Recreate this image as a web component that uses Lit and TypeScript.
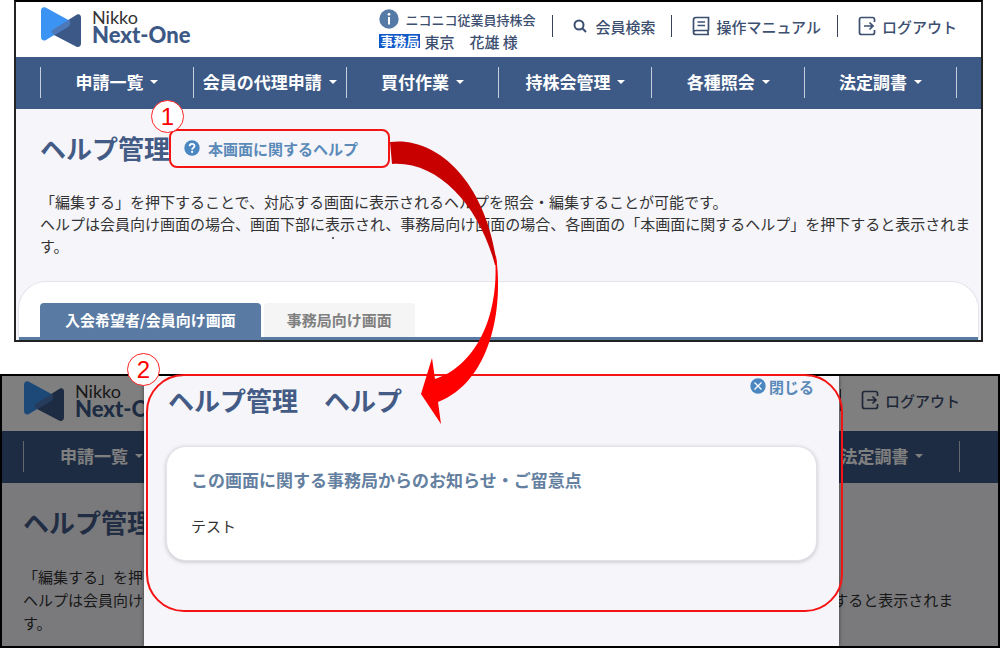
import { LitElement, html, svg, css } from "lit";
import { customElement, property } from "lit/decorators.js";

const NAV = ["申請一覧", "会員の代理申請", "買付作業", "持株会管理", "各種照会", "法定調書"];

const logo = html`<svg width="42" height="42" viewBox="0 0 42 42" aria-hidden="true">
  <path d="M37 8.500C39.500 7.500 41 9 41 11.500V37.500C41 40.500 38.500 42 36 40.500L13 28.500C10.500 27 10.500 25 13 23.500Z" fill="#3c5886" />
  <path d="M1 5C1 2 3 .5 6 1.700L27.500 13.500C31 15.500 31 18.500 27.500 21L6 34C3.500 35.300 1 34 1 31Z" fill="#3b93f3" />
  <path d="M11.800 26.500C11 25.700 11.500 24.500 13 23.500L29.500 13.500V15C31 17 30 19.500 27.500 21L14 29.200Z" fill="#4d79b8" />
</svg>`;

const searchIcon = html`<svg width="14" height="16" viewBox="0 0 14 16" aria-hidden="true">
  <g fill="none" stroke="currentColor" stroke-width="2"><circle cx="6" cy="7" r="4.500" /><path d="M9.300 10.300L13 14" /></g>
</svg>`;

const bookIcon = html`<svg width="18" height="20" viewBox="0 0 18 20" aria-hidden="true">
  <g fill="none" stroke="currentColor" stroke-width="1.700">
    <path d="M16.500 14.500V1.500H4Q1.500 1.500 1.500 4V16.500Q1.500 18.500 4 18.500H17M16.500 14.500H4Q1.500 14.500 1.500 16.500M16 14.500V18.500M5.500 6H13M5.500 9.500H13" />
  </g>
</svg>`;

const logoutIcon = html`<svg width="18" height="20" viewBox="0 0 18 20" aria-hidden="true">
  <g fill="none" stroke="currentColor" stroke-width="1.700">
    <path d="M16.500 6V3.500Q16.500 1.500 14.500 1.500H3.500Q1.500 1.500 1.500 3.500V16.500Q1.500 18.500 3.500 18.500H14.500Q16.500 18.500 16.500 16.500V14M6 10H14.500M11.500 6.500L15 10L11.500 13.500" />
  </g>
</svg>`;

const infoIcon = html`<svg width="20" height="20" viewBox="0 0 20 20" aria-hidden="true">
  <circle cx="10" cy="10" r="9.700" fill="#547aa5" />
  <circle cx="10" cy="5.300" r="1.400" fill="#fff" /><path d="M10 8V15.500" stroke="#fff" stroke-width="2" />
</svg>`;

const helpIcon = html`<svg width="16" height="16" viewBox="0 0 16 16" aria-hidden="true">
  <circle cx="8" cy="8" r="7.700" fill="#4a86c0" />
  <path d="M5.600 6.300C5.600 3 10.500 3.200 10.500 6C10.500 7.700 8.100 7.700 8.100 9.700" fill="none" stroke="#fff" stroke-width="1.800" />
  <circle cx="8.100" cy="11.900" r="1.100" fill="#fff" />
</svg>`;

const closeIcon = html`<svg width="16" height="16" viewBox="0 0 16 16" aria-hidden="true">
  <circle cx="8" cy="8" r="7.700" fill="#4a86c0" />
  <path d="M4.500 4.500L11.500 11.500M11.500 4.500L4.500 11.500" stroke="#fff" stroke-width="1.300" />
</svg>`;

const shared = css`
  * { box-sizing: border-box; }
  a { color: inherit; text-decoration: none; }
  button { margin: 0; padding: 0; border: 0; background: none; color: inherit; font: inherit; cursor: pointer; }
  svg { display: block; flex: none; }
`;

@customElement("site-header")
export class SiteHeader extends LitElement {
  static styles = [
    shared,
    css`
      :host { display: block; color: #3d4f70; }
      .top {
        display: flex; align-items: flex-start; justify-content: space-between; height: 55px;
        padding: 4px var(--edge-right) 0 var(--edge-left); background: #fff; white-space: nowrap;
      }
      .brand { display: flex; gap: 10px; font-family: Lato, sans-serif; }
      .names { display: flex; flex-direction: column; padding-top: 2px; }
      .nikko { font-size: 18px; line-height: 18px; color: #333; }
      .next { font-size: 22px; line-height: 18px; font-weight: 900; color: #3c5886; }
      .tools { display: flex; }
      .user { display: flex; flex-direction: column; padding: 2px 17px 0 0; }
      .row { display: flex; align-items: center; height: 22px; }
      .org { gap: 6px; font-size: 13px; font-weight: 500; }
      .person { gap: 4px; font-size: 15px; font-weight: 500; }
      .badge { padding: 0 1px; background: #1057c8; color: #fff; font-size: 13px; line-height: 14px; font-weight: 700; }
      .tool {
        display: flex; align-items: center; gap: 6px; height: 22px; margin-top: 9px;
        padding: 0 16px 0 20px; border-left: 1px solid #39445a; font-size: 15px; font-weight: 500;
      }
      .tool:last-child { padding-right: 0; }
      .search { gap: 8px; }
      .nav {
        display: grid; grid-template-columns: repeat(6, 1fr); height: 52px; align-items: center;
        padding: 0 var(--edge-right) 2px var(--edge-left); background: #3d5986;
      }
      .item {
        display: flex; align-items: center; justify-content: center; gap: 7px; height: 31px;
        border-left: 1px solid #c5cedd; color: #fff; font-size: 17px; line-height: 24px; font-weight: 700; white-space: nowrap;
      }
      .item:last-child { border-right: 1px solid #c5cedd; }
      .caret { border: 4px solid transparent; border-top-color: #fff; border-bottom: 0; }
    `,
  ];

  render() {
    return html`
      <header class="top">
        <a class="brand" href="#">${logo}<span class="names"><span class="nikko">Nikko</span><span class="next">Next-One</span></span></a>
        <div class="tools">
          <div class="user">
            <div class="row org">${infoIcon}<span>ニコニコ従業員持株会</span></div>
            <div class="row person"><span class="badge">事務局</span><span>東京　花雄 様</span></div>
          </div>
          <a class="tool search" href="#">${searchIcon}会員検索</a>
          <a class="tool" href="#">${bookIcon}操作マニュアル</a>
          <a class="tool" href="#">${logoutIcon}ログアウト</a>
        </div>
      </header>
      <nav class="nav">
        ${NAV.map((label) => html`<button class="item" type="button">${label}<span class="caret"></span></button>`)}
      </nav>
    `;
  }
}

@customElement("help-page")
export class HelpPage extends LitElement {
  @property({ type: Boolean }) tabs = false;

  static styles = [
    shared,
    css`
      :host { display: block; background: #f5f5fa; }
      .intro { padding: 20px var(--text-right) 0 var(--edge-left); }
      .title { display: flex; align-items: center; height: 38px; }
      h1 { margin: 0; font-size: 26px; line-height: 38px; font-weight: 700; color: #435b85; white-space: nowrap; }
      .help { display: flex; align-items: center; gap: 8px; margin-left: 14px; font-size: 15px; font-weight: 700; color: #5a8ab8; white-space: nowrap; }
      .text { margin: 24px 0 0; font-size: 15px; line-height: var(--text-line); color: #333; }
      .panel { margin: 24px 2px 0; padding-top: 21px; border: 1px solid #e3e5ec; border-bottom: 0; border-radius: 28px 28px 0 0; background: #fff; }
      .tabs { display: flex; gap: 3px; padding: 0 21px; border-bottom: 3px solid #587aa3; }
      .tab { padding: 0 23px 2px; height: 34px; border-radius: 4px 4px 0 0; background: #f5f5f5; color: #808080; font-size: 15px; font-weight: 700; white-space: nowrap; }
      .active { padding: 0 25px 2px; background: #587aa3; color: #fff; }
    `,
  ];

  render() {
    return html`
      <site-header></site-header>
      <main>
        <div class="intro">
          <div class="title"><h1>ヘルプ管理</h1><a class="help" href="#">${helpIcon}本画面に関するヘルプ</a></div>
          <p class="text">「編集する」を押下することで、対応する画面に表示されるヘルプを照会・編集することが可能です。<br />ヘルプは会員向け画面の場合、画面下部に表示され、事務局向け画面の場合、各画面の「本画面に関するヘルプ」を押下すると表示されます。</p>
        </div>
        ${this.tabs
          ? html`<div class="panel">
              <div class="tabs" role="tablist">
                <button class="tab active" type="button" role="tab" aria-selected="true">入会希望者/会員向け画面</button>
                <button class="tab" type="button" role="tab" aria-selected="false">事務局向け画面</button>
              </div>
            </div>`
          : ""}
      </main>
    `;
  }
}

@customElement("help-dialog")
export class HelpDialog extends LitElement {
  static styles = [
    shared,
    css`
      :host { display: block; }
      .dialog {
        position: static; display: block; width: 100%; height: 100%; margin: 0; padding: 0 22px; border: 0;
        background: #f5f5fa; box-shadow: 0 0 4px rgba(0, 0, 0, 0.5);
      }
      .head { display: flex; justify-content: space-between; align-items: flex-start; padding: 0 3px 0 2px; }
      h2 { margin: 3px 0 0; font-size: 26px; line-height: 42px; font-weight: 700; color: #435b85; }
      .close { display: flex; align-items: center; gap: 3px; height: 20px; color: #5a8ab8; font-size: 15px; font-weight: 700; }
      .card { margin-top: 25px; padding: 20px 24px 23px; border: 1px solid #e2e3e9; border-radius: 20px; background: #fff; box-shadow: 0 1px 4px rgba(0, 0, 0, 0.2); }
      h3 { margin: 0; font-size: 17px; line-height: 26px; font-weight: 700; color: #6480a0; }
      p { margin: 22px 0 0; font-size: 15px; line-height: 22px; color: #333; }
    `,
  ];

  render() {
    return html`<dialog class="dialog" open aria-label="ヘルプ管理　ヘルプ">
      <div class="head"><h2>ヘルプ管理　ヘルプ</h2><button class="close" type="button">${closeIcon}閉じる</button></div>
      <section class="card"><h3>この画面に関する事務局からのお知らせ・ご留意点</h3><p>テスト</p></section>
    </dialog>`;
  }
}

@customElement("app-root")
export class AppRoot extends LitElement {
  static styles = [
    shared,
    css`
      :host { display: block; font-family: "Noto Sans CJK JP", sans-serif; background: #fff; }
      .sheet { position: relative; display: flex; flex-direction: column; gap: 32px; min-height: 100vh; }
      .window { overflow: hidden; border: 2px solid #222; }
      .before { --edge-left: 24px; --edge-right: 24px; --text-right: 6px; --text-line: 22px; margin: 0 17px 0 14px; border-top-color: #000; }
      .after { --edge-left: 21px; --edge-right: 38px; --text-right: 38px; --text-line: 23px; position: relative; flex: 1; border-color: #000; background: #f5f5fa; }
      .backdrop { position: absolute; inset: 0; display: flex; justify-content: center; padding: 0 159px 0 142px; background: rgba(0, 0, 0, 0.5); }
      .modal { flex: 1; }
      .mark { position: absolute; border: 2px solid #f51414; }
      .mark-link { left: 169px; top: 129px; width: 221px; height: 39px; border-radius: 8px; }
      .mark-dialog { left: 146px; top: 374px; width: 697px; height: 238px; border-radius: 38px; }
      .number {
        position: absolute; width: 33px; height: 33px; border: 1px solid #f22; border-radius: 50%; background: #fff;
        color: #f00; font-family: "Liberation Sans", sans-serif; font-size: 24px; line-height: 32px; text-align: center;
      }
      .one { left: 151px; top: 100px; }
      .two { left: 127px; top: 353px; }
      .arrow { position: absolute; left: 0; top: 0; pointer-events: none; }
    `,
  ];

  render() {
    return html`
      <div class="sheet">
        <div class="window before"><help-page tabs></help-page></div>
        <div class="window after">
          <help-page></help-page>
          <div class="backdrop"><help-dialog class="modal"></help-dialog></div>
        </div>
        <div class="mark mark-link"></div>
        <div class="mark mark-dialog"></div>
        <svg class="arrow" width="520" height="440" viewBox="0 0 520 440" aria-hidden="true">
          ${svg`
            <path d="M390 142C436 136 486 180 497 265H495C480 208 440 161 392 164Z" fill="#c80000" />
            <path d="M496 256C504 310 490 382 438 402L441 424L421 394L432 358L435 379C473 367 500 320 495 256Z" fill="#f00" />
            <circle cx="333" cy="238" r="1" fill="#333" />
          `}
        </svg>
        <span class="number one">1</span>
        <span class="number two">2</span>
      </div>
    `;
  }
}
